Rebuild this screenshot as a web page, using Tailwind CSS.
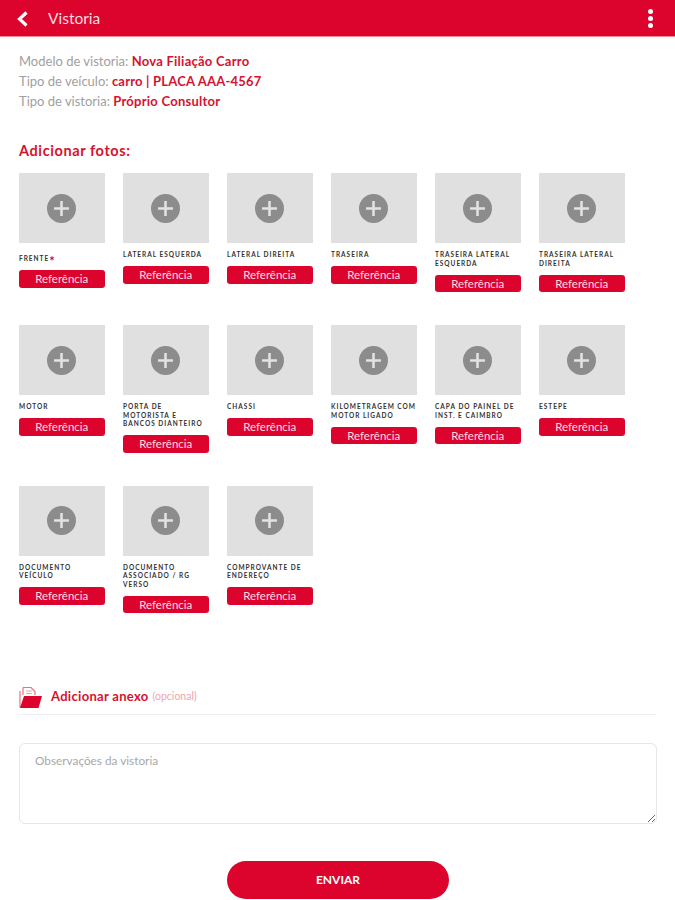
<!DOCTYPE html>
<html lang="pt-BR">
<head>
  <meta charset="UTF-8" />
  <meta name="viewport" content="width=device-width, initial-scale=1.0" />
  <title>Vistoria</title>
  <script src="https://cdn.jsdelivr.net/npm/@tailwindcss/browser@4"></script>
</head>
<body class="bg-white h-[900px] overflow-hidden font-['Lato','Noto_Sans',sans-serif] text-[#a0a0a0]">

  <!-- barra superior -->
  <header class="h-[37px] bg-[#dc042c] border-b border-[#f58a8f] flex items-center pl-[16px] pr-[22px] text-white">
    <svg class="mt-[2px] w-[13px] h-[16px]" viewBox="0 0 13 16" fill="none" stroke="currentColor" stroke-width="3.2">
      <path d="M10.5 1.5 L3.5 8 L10.5 14.5" />
    </svg>
    <h1 class="mt-[2px] ml-[19px] text-[15.5px] leading-none text-[#fbdde2]">Vistoria</h1>
    <div class="ml-auto flex flex-col gap-[2px]">
      <span class="w-[5px] h-[5px] rounded-full bg-white"></span>
      <span class="w-[5px] h-[5px] rounded-full bg-white"></span>
      <span class="w-[5px] h-[5px] rounded-full bg-white"></span>
    </div>
  </header>

  <main class="px-[19px]">
    <div class="pt-[14px] text-[13px] leading-[20px]">
      <p>Modelo de vistoria: <b class="text-[#d5122f] tracking-[0.25px]">Nova Filiação Carro</b></p>
      <p>Tipo de veículo: <b class="text-[#d5122f] tracking-[0.2px]">carro | PLACA AAA-4567</b></p>
      <p>Tipo de vistoria: <b class="text-[#d5122f] tracking-[0.25px]">Próprio Consultor</b></p>
    </div>

    <h2 class="mt-[30px] text-[14.5px] leading-[20px] font-bold tracking-[0.6px] text-[#d5122f]">Adicionar fotos:</h2>

    <div id="fotos" class="mt-[12px] grid grid-cols-[repeat(6,85.5px)] gap-x-[18.5px] gap-y-[33px] items-start"></div>

    <!-- anexo -->
    <div class="mt-[64.5px] h-[37px] pt-[2px] border-b border-[#eeeeee] flex items-center">
      <svg class="w-[23px] h-[24px]" viewBox="0 0 23 24">
        <path d="M4 2.5 H12 L16 6.5 V10 M4 2.5 V10" fill="none" stroke="#e8707f" stroke-width="1.2" />
        <path d="M1 6 V22 H5" fill="none" stroke="#e8707f" stroke-width="1.2" />
        <path d="M7 6 H13 M7 8.5 H13" stroke="#f0a0aa" stroke-width="1" />
        <path d="M5 11 H23 L19.5 23 H1 Z" fill="#dc042c" />
      </svg>
      <span class="ml-[9px] text-[13px] font-bold tracking-[0.3px] text-[#d5122f]">Adicionar anexo</span>
      <span class="ml-[4px] text-[10.5px] text-[#f0a5ae]">(opcional)</span>
    </div>

    <textarea placeholder="Observações da vistoria" class="block mt-[28px] w-[638px] h-[81px] px-[15px] py-[9px] border border-[#e6e6e6] rounded-[6px] text-[11.8px] leading-[16px] placeholder:text-[#a8a8a8]"></textarea>

    <div class="mt-[37px] flex justify-center pl-[1px]">
      <button class="w-[222px] h-[38px] rounded-full bg-[#dc042c] text-white text-[12px] font-bold">ENVIAR</button>
    </div>
  </main>

  <script>
    const fotos = [
      'FRENTE', 'LATERAL ESQUERDA', 'LATERAL DIREITA', 'TRASEIRA', 'TRASEIRA LATERAL ESQUERDA', 'TRASEIRA LATERAL DIREITA',
      'MOTOR', 'PORTA DE MOTORISTA E BANCOS DIANTEIRO', 'CHASSI', 'KILOMETRAGEM COM MOTOR LIGADO', 'CAPA DO PAINEL DE INST. E CAIMBRO', 'ESTEPE',
      'DOCUMENTO VEÍCULO', 'DOCUMENTO ASSOCIADO / RG VERSO', 'COMPROVANTE DE ENDEREÇO'
    ];

    document.getElementById('fotos').innerHTML = fotos.map((nome, i) => `
      <div>
        <div class="h-[70px] bg-[#e0e0e0] flex items-center justify-center">
          <svg class="w-[29px] h-[29px]" viewBox="0 0 29 29">
            <circle cx="14.5" cy="14.5" r="14.5" fill="#8c8c8c" />
            <path d="M14.5 7 V22 M7 14.5 H22" stroke="#e2e2e2" stroke-width="2.6" />
          </svg>
        </div>
        ${i === 0
          ? `<p class="mt-[8px] h-[12.5px] pt-[4px] text-[6.5px] leading-[8.5px] font-bold tracking-[1px] text-[#333333]">${nome}<span class="text-[#dc042c] text-[13px] leading-none align-top">*</span></p>`
          : `<p class="mt-[8px] text-[6.5px] leading-[8.5px] font-bold tracking-[1px] text-[#333333]">${nome}</p>`}
        <button class="mt-[6.5px] block w-full h-[17.5px] rounded-[3px] bg-[#dc042c] text-[#fbdde2] text-[11.5px] leading-none">Referência</button>
      </div>
    `).join('');
  </script>
</body>
</html>
